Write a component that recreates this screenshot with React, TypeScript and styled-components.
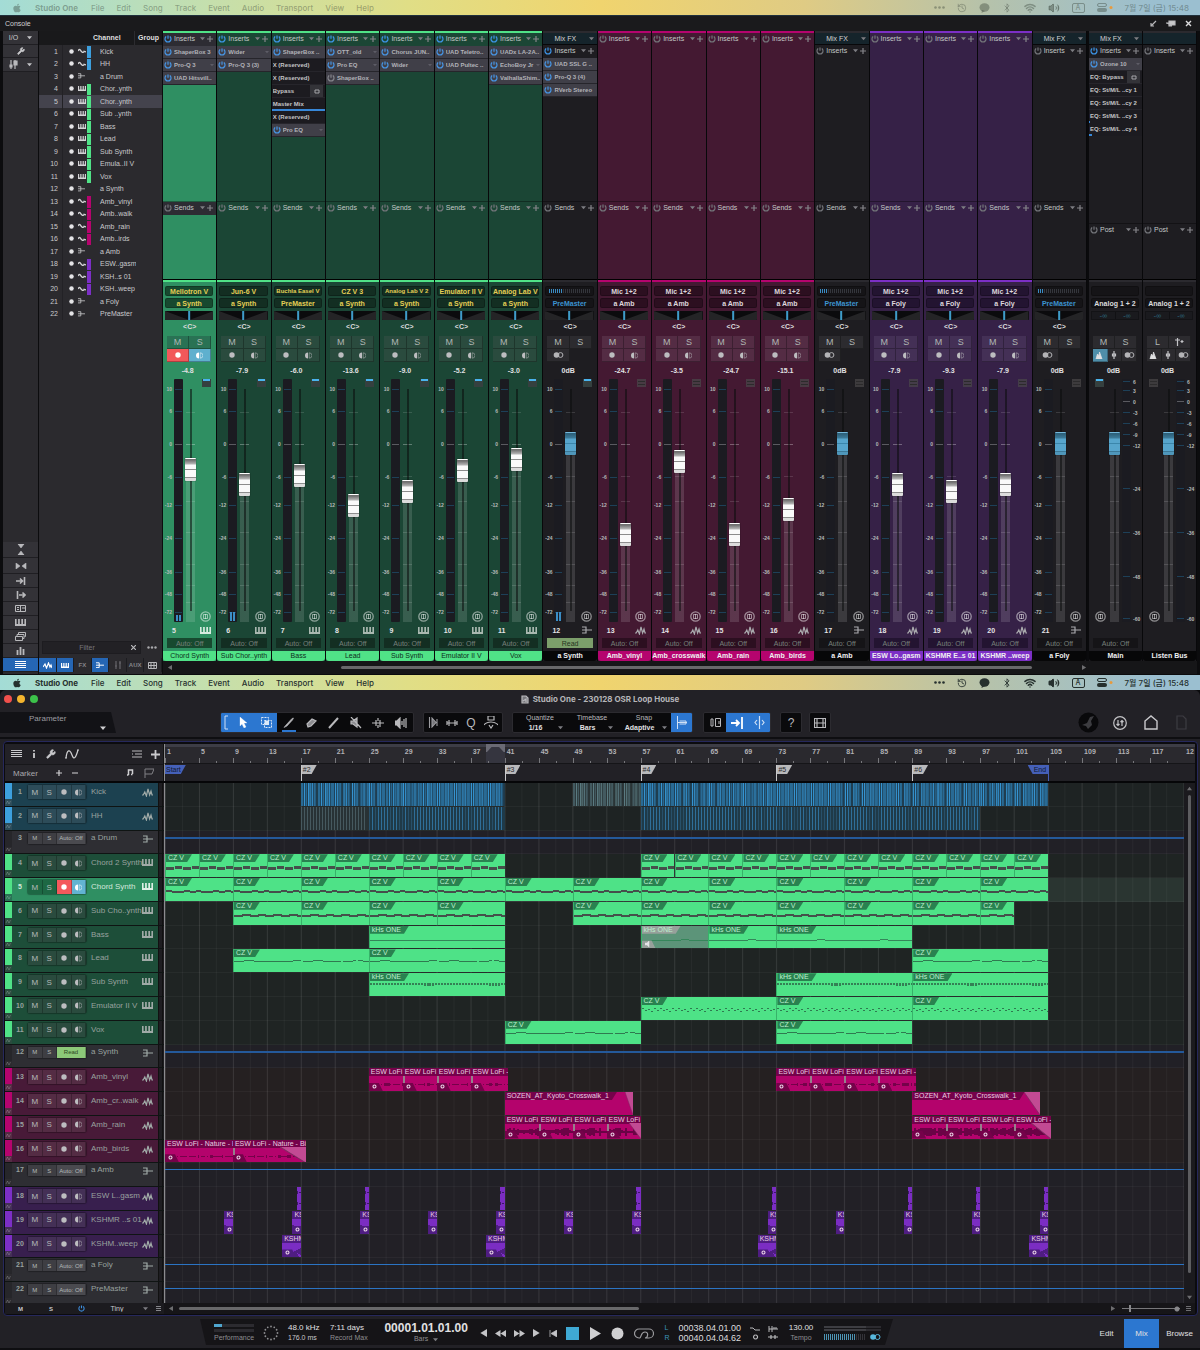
import React from "react";
import styled, { createGlobalStyle, css } from "styled-components";
import { FaApple } from "react-icons/fa";
import { Bluetooth, History, Volume2, Wifi, Wrench } from "lucide-react";

const Global = createGlobalStyle`
  * { box-sizing: border-box; }
  body { margin: 0; background: #0b0b0d; font-family: "Liberation Sans", Arial, "Noto Sans CJK KR", sans-serif; font-size: 7px; color: #c9c9cc; }
  ul, ol { list-style: none; margin: 0; padding: 0; }
  button, input, select { font: inherit; color: inherit; margin: 0; padding: 0; border: 0; background: transparent; }
  button { display: flex; align-items: center; justify-content: center; }
  select { appearance: none; }
  svg { display: block; flex: none; }
`;

/* ---------- data ---------- */

type Kind = "audio" | "inst" | "bus";
type Tone = "blue" | "green" | "sel" | "pink" | "violet" | "bus";

const tones: Record<Tone, { line: string; strip: string; head: string; lane: string; btn: string; box: string }> = {
  blue: { line: "#3d9fdd", strip: "#1d3d4c", head: "#1c4150", lane: "#1e2323", btn: "#2d4c59", box: "#14303c" },
  green: { line: "#50e287", strip: "#1b4635", head: "#1d4e39", lane: "#1f2423", btn: "#2a4b3e", box: "#132e22" },
  sel: { line: "#50e287", strip: "#2f8f62", head: "#2f8f62", lane: "#2a3531", btn: "#297254", box: "#17492f" },
  pink: { line: "#b5046e", strip: "#441932", head: "#481a38", lane: "#252021", btn: "#542c44", box: "#2c0f20" },
  violet: { line: "#7c2fc6", strip: "#362147", head: "#381f4e", lane: "#222026", btn: "#443056", box: "#231431" },
  bus: { line: "#2b2a2f", strip: "#1e1d21", head: "#2e2e33", lane: "#212026", btn: "#2c2b2f", box: "#151417" },
};

interface Channel { n: number; name: string; list: string; tone: Tone; kind: Kind }
const channels: Channel[] = [
  { n: 1, name: "Kick", list: "Kick", tone: "blue", kind: "audio" },
  { n: 2, name: "HH", list: "HH", tone: "blue", kind: "audio" },
  { n: 3, name: "a Drum", list: "a Drum", tone: "bus", kind: "bus" },
  { n: 4, name: "Chord 2 Synth", list: "Chor..ynth", tone: "green", kind: "inst" },
  { n: 5, name: "Chord Synth", list: "Chor..ynth", tone: "sel", kind: "inst" },
  { n: 6, name: "Sub Cho..ynth", list: "Sub ..ynth", tone: "green", kind: "inst" },
  { n: 7, name: "Bass", list: "Bass", tone: "green", kind: "inst" },
  { n: 8, name: "Lead", list: "Lead", tone: "green", kind: "inst" },
  { n: 9, name: "Sub Synth", list: "Sub Synth", tone: "green", kind: "inst" },
  { n: 10, name: "Emulator II V", list: "Emula..II V", tone: "green", kind: "inst" },
  { n: 11, name: "Vox", list: "Vox", tone: "green", kind: "inst" },
  { n: 12, name: "a Synth", list: "a Synth", tone: "bus", kind: "bus" },
  { n: 13, name: "Amb_vinyl", list: "Amb_vinyl", tone: "pink", kind: "audio" },
  { n: 14, name: "Amb_cr..walk", list: "Amb..walk", tone: "pink", kind: "audio" },
  { n: 15, name: "Amb_rain", list: "Amb_rain", tone: "pink", kind: "audio" },
  { n: 16, name: "Amb_birds", list: "Amb..irds", tone: "pink", kind: "audio" },
  { n: 17, name: "a Amb", list: "a Amb", tone: "bus", kind: "bus" },
  { n: 18, name: "ESW L..gasm", list: "ESW..gasm", tone: "violet", kind: "audio" },
  { n: 19, name: "KSHMR ..s 01", list: "KSH..s 01", tone: "violet", kind: "audio" },
  { n: 20, name: "KSHM..weep", list: "KSH..weep", tone: "violet", kind: "audio" },
  { n: 21, name: "a Foly", list: "a Foly", tone: "bus", kind: "bus" },
  { n: 22, name: "PreMaster", list: "PreMaster", tone: "bus", kind: "bus" },
];

type Slot = [kind: "on" | "off" | "text" | "toggle" | "bar", label: string, level?: number];
interface StripData {
  n: number; label: string; tone: Tone; kind: Kind; device?: string; out: string; db: string; fader: number;
  slots?: Slot[]; level?: number; lit?: boolean; send?: number;
}
const on = (...names: string[]): Slot[] => names.map((s) => ["on", s] as Slot);
const strips: StripData[] = [
  { n: 5, label: "Chord Synth", tone: "sel", kind: "inst", device: "Mellotron V", out: "a Synth", db: "-4.8", fader: 141, slots: on("ShaperBox 3", "Pro-Q 3", "UAD Hitsvill.."), level: 6, lit: true },
  { n: 6, label: "Sub Chor..ynth", tone: "green", kind: "inst", device: "Jun-6 V", out: "a Synth", db: "-7.9", fader: 126, slots: on("Wider", "Pro-Q 3 (3)"), level: 9, lit: true },
  { n: 7, label: "Bass", tone: "green", kind: "inst", device: "Buchla Easel V", out: "PreMaster", db: "-6.0", fader: 135, lit: true, slots: [["on", "ShaperBox .."], ["text", "X (Reserved)"], ["text", "X (Reserved)"], ["toggle", "Bypass"], ["bar", "Master Mix", 100], ["text", "X (Reserved)"], ["on", "Pro EQ"]] },
  { n: 8, label: "Lead", tone: "green", kind: "inst", device: "CZ V 3", out: "a Synth", db: "-13.6", fader: 105, lit: true, slots: [["on", "OTT_old"], ["on", "Pro EQ"], ["off", "ShaperBox .."]] },
  { n: 9, label: "Sub Synth", tone: "green", kind: "inst", device: "Analog Lab V 2", out: "a Synth", db: "-9.0", fader: 119, lit: true, slots: on("Chorus JUN..", "Wider") },
  { n: 10, label: "Emulator II V", tone: "green", kind: "inst", device: "Emulator II V", out: "a Synth", db: "-5.2", fader: 140, lit: true, slots: on("UAD Teletro..", "UAD Pultec ..") },
  { n: 11, label: "Vox", tone: "green", kind: "inst", device: "Analog Lab V", out: "a Synth", db: "-3.0", fader: 151, lit: true, slots: on("UADx LA-2A..", "EchoBoy Jr", "ValhallaShim..") },
  { n: 12, label: "a Synth", tone: "bus", kind: "bus", out: "PreMaster", db: "0dB", fader: 167, level: 9, lit: true, slots: on("UAD SSL G ..", "Pro-Q 3 (4)", "RVerb Stereo"), send: 7 },
  { n: 13, label: "Amb_vinyl", tone: "pink", kind: "audio", device: "Mic 1+2", out: "a Amb", db: "-24.7", fader: 76 },
  { n: 14, label: "Amb_crosswalk", tone: "pink", kind: "audio", device: "Mic 1+2", out: "a Amb", db: "-3.5", fader: 149 },
  { n: 15, label: "Amb_rain", tone: "pink", kind: "audio", device: "Mic 1+2", out: "a Amb", db: "-24.7", fader: 76 },
  { n: 16, label: "Amb_birds", tone: "pink", kind: "audio", device: "Mic 1+2", out: "a Amb", db: "-15.1", fader: 101 },
  { n: 17, label: "a Amb", tone: "bus", kind: "bus", out: "PreMaster", db: "0dB", fader: 167, send: 4 },
  { n: 18, label: "ESW Lo..gasm", tone: "violet", kind: "audio", device: "Mic 1+2", out: "a Foly", db: "-7.9", fader: 126 },
  { n: 19, label: "KSHMR E..s 01", tone: "violet", kind: "audio", device: "Mic 1+2", out: "a Foly", db: "-9.3", fader: 119 },
  { n: 20, label: "KSHMR ..weep", tone: "violet", kind: "audio", device: "Mic 1+2", out: "a Foly", db: "-7.9", fader: 126 },
  { n: 21, label: "a Foly", tone: "bus", kind: "bus", out: "PreMaster", db: "0dB", fader: 167, send: 3 },
];

type Look = "kick" | "hat" | "chord" | "riff" | "sub" | "bass" | "lead" | "dots" | "arp" | "loop" | "plain" | "noise" | "sliver" | "hit" | "sweep";
interface ClipData { at: number; to: number; look: Look; title?: string; dim?: boolean; fade?: number; joint?: boolean }
const run = (from: number, to: number, step: number, look: Look, title?: string): ClipData[] => {
  const out: ClipData[] = [];
  for (let b = from; b < to; b += step) out.push({ at: b, to: Math.min(b + step, to), look, title });
  return out;
};
const loops = (from: number, end: number, look: Look, fade?: number): ClipData[] =>
  [0, 1, 2, 3].map((i) => ({
    at: from + i * 4, to: i === 3 ? end : from + i * 4 + 4, look, joint: i > 0,
    title: i === 3 && end > from + 16.2 ? "ESW LoFi -" : "ESW LoFi", fade: i === 3 ? fade : undefined,
  }));
const at = (bars: number[], len: number, look: Look, title?: string): ClipData[] => bars.map((b) => ({ at: b - len, to: b, look, title }));

const clips: Record<number, ClipData[]> = {
  1: [{ at: 17, to: 41, look: "kick" }, { at: 49, to: 57, look: "kick", dim: true }, { at: 57, to: 105, look: "kick" }],
  2: [{ at: 17, to: 25, look: "hat", dim: true }, { at: 25, to: 41, look: "hat" }, { at: 57, to: 97, look: "hat" }],
  4: [...run(1, 41, 4, "chord", "CZ V"), ...run(57, 105, 4, "chord", "CZ V")],
  5: run(1, 105, 8, "riff", "CZ V"),
  6: [...run(9, 41, 8, "sub", "CZ V"), ...run(49, 101, 8, "sub", "CZ V")],
  7: [{ at: 25, to: 41, look: "bass", title: "kHs ONE" }, { at: 57, to: 65, look: "bass", title: "kHs ONE", dim: true }, { at: 65, to: 73, look: "bass", title: "kHs ONE" }, { at: 73, to: 89, look: "bass", title: "kHs ONE" }],
  8: [...run(9, 41, 16, "lead", "CZ V"), ...run(89, 105, 16, "lead", "CZ V")],
  9: [...run(25, 41, 16, "dots", "kHs ONE"), ...run(73, 105, 16, "dots", "kHs ONE")],
  10: run(57, 105, 16, "arp", "CZ V"),
  11: [...run(41, 57, 16, "lead", "CZ V"), ...run(73, 89, 16, "lead", "CZ V")],
  13: [...loops(25, 41.4, "loop"), ...loops(73, 89.4, "loop")],
  14: [{ at: 41, to: 56.1, look: "plain", title: "SOZEN_AT_Kyoto_Crosswalk_1", fade: 8 }, { at: 89, to: 104.1, look: "plain", title: "SOZEN_AT_Kyoto_Crosswalk_1", fade: 16 }],
  15: [...loops(41, 57, "noise", 12), ...loops(89, 105.3, "noise", 20)],
  16: [{ at: 1, to: 9, look: "loop", title: "ESW LoFi - Nature - Birds" }, { at: 9, to: 17.6, look: "loop", title: "ESW LoFi - Nature - Birds", joint: true, fade: 26 }],
  18: at([17, 25, 41, 57, 73, 89, 97, 105], 0.5, "sliver"),
  19: at([9, 17, 25, 33, 41, 49, 57, 73, 81, 89, 97, 105], 1, "hit", "KSHMR"),
  20: at([17, 41, 73, 105], 2.2, "sweep", "KSHMR"),
};
const BARS = 120;
const pct = (bars: number) => `${(bars / BARS) * 100}%`;

/* ---------- icons ---------- */

const Power = ({ c = "#3d8fe0", s = 8 }: { c?: string; s?: number }) => (
  <svg width={s} height={s} viewBox="0 0 8 8" fill="none" stroke={c} strokeWidth="1.2"><path d="M2.2 1.6a3 3 0 1 0 3.6 0M4 .6v3.2" /></svg>
);
const Caret = ({ c = "#7d7d82", s = 5 }: { c?: string; s?: number }) => (
  <svg width={s} height={s} viewBox="0 0 6 6"><path d="M0 1.500h6L3 5z" fill={c} /></svg>
);
const Plus = ({ c = "#85858a", s = 6 }: { c?: string; s?: number }) => (
  <svg width={s} height={s} viewBox="0 0 6 6"><path d="M3 0v6M0 3h6" stroke={c} strokeWidth="1.2" /></svg>
);
const Keys = ({ c = "#a9b8b0", w = 11 }: { c?: string; w?: number }) => (
  <svg width={w} height={Math.round(w * 0.64)} viewBox="0 0 11 7" preserveAspectRatio="none"><path d="M0 0h1.600v5h1.500V0h1.700v5h1.500V0H8v5h1.400V0H11v7H0z" fill={c} /></svg>
);
const Wave = ({ c = "#a9a9ad" }: { c?: string }) => (
  <svg width="11" height="9" viewBox="0 0 11 9" fill="none" stroke={c} strokeWidth="1.2"><path d="M0 7h1.200L2.800 4l1.600 4L6 1l1.600 6L9 3l1 4h1" /></svg>
);
const Bus = ({ c = "#a9a9ad", w = 10 }: { c?: string; w?: number }) => (
  <svg width={w} height={w * 0.8} viewBox="0 0 10 8" fill="none" stroke={c} strokeWidth="1.2"><path d="M0 1h4v6H0M0 4h10" /></svg>
);
const Tilde = () => (
  <svg width="8" height="6" viewBox="0 0 8 6"><path d="M0 3c1-2 2-2 3 0l1 1c.8.8 1.600.4 2-.6L8 4" fill="none" stroke="#d4d4d6" strokeWidth="1.300" /></svg>
);
const KindIcon = ({ kind, c }: { kind: Kind; c?: string }) => (kind === "inst" ? <Keys c={c} /> : kind === "audio" ? <Wave c={c} /> : <Bus c={c} />);
const Dot = ({ c = "#bdbdc0", s = 6 }: { c?: string; s?: number }) => <svg width={s} height={s} viewBox="0 0 6 6"><circle cx="3" cy="3" r="2.700" fill={c} /></svg>;
const Monitor = ({ c = "#bdbdc0" }: { c?: string }) => (
  <svg width="7" height="7" viewBox="0 0 7 7"><path d="M3 .5a3 3 0 0 0 0 6z" fill={c} /><path d="M4.200 .8a2.700 2.700 0 0 1 0 5.400z" fill="none" stroke={c} strokeOpacity=".7" strokeWidth=".7" /></svg>
);
const Rings = ({ c = "#b4b4b7" }: { c?: string }) => (
  <svg width="11" height="6" viewBox="0 0 11 6"><circle cx="3.500" cy="3" r="2.800" fill={c} /><circle cx="7.500" cy="3" r="2.400" fill="none" stroke={c} /></svg>
);
const Stereo = () => (
  <svg width="11" height="11" viewBox="0 0 11 11" fill="none" stroke="#ffffff" strokeOpacity=".5"><circle cx="5.500" cy="5.500" r="4.700" strokeWidth="1.300" /><path d="M3.500 3.500v4h4v-4zM5.500 3v5" strokeWidth="1" /></svg>
);
const Gear = () => (
  <svg width="5" height="5" viewBox="0 0 6 6"><circle cx="3" cy="3" r="1.800" fill="none" stroke="#ead5e6" strokeWidth="1.300" /></svg>
);
const Arrow = ({ dir, c = "#6d6d70", s = 5 }: { dir: "l" | "r" | "u" | "d"; c?: string; s?: number }) => (
  <svg width={s} height={s} viewBox="0 0 6 6"><path fill={c} d={{ l: "M6 0v6L1 3z", r: "M0 0v6l5-3z", u: "M0 5h6L3 1z", d: "M0 1h6L3 5z" }[dir]} /></svg>
);
const Lines = ({ n = 4, w = 11, c = "#c9c9cc" }: { n?: number; w?: number; c?: string }) => (
  <svg width={w} height={n * 2} viewBox={`0 0 ${w} ${n * 2}`}>{Array.from({ length: n }, (_, i) => <rect key={i} y={i * 2} width={w} height="1" fill={c} />)}</svg>
);
const Glyph = ({ d, w = 12, h = 12, c = "#b9b9bc", fill = "none", sw = 1.2 }: { d: string; w?: number; h?: number; c?: string; fill?: string; sw?: number }) => (
  <svg width={w} height={h} viewBox={`0 0 ${w} ${h}`} fill={fill} stroke={c} strokeWidth={sw}><path d={d} /></svg>
);

/* ---------- mac menu bar ---------- */

const MenuBar = styled.nav<{ $faded?: boolean }>`
  height: 15px; display: flex; align-items: center; justify-content: space-between; padding: 0 11px 0 12px;
  background: linear-gradient(90deg, #a3dcd6 0%, #c4dfae 17%, #e0de86 34%, #f0d46e 50%, #dfcb84 67%, #b6c2aa 82%, #9bbfd0 96%);
  font-family: Inter, "Noto Sans CJK KR", sans-serif; font-size: 8px; font-weight: 500;
  color: ${(p) => (p.$faded ? "rgba(50,60,50,.38)" : "#26302e")};
`;
const MenuItems = styled.ul`display: flex; align-items: center; gap: 12px; b { font-weight: 700; margin: 0 1px; }`;
const MenuStatus = styled.div`display: flex; align-items: center; gap: 12px; svg { display: block; }`;
const KeyBox = styled.span`border: 1px solid currentColor; border-radius: 2px; width: 13px; height: 10px; font-size: 7px; line-height: 8px; text-align: center;`;

const Menu = ({ faded }: { faded?: boolean }) => (
  <MenuBar $faded={faded} aria-label="Menu bar">
    <MenuItems>
      <li><FaApple size={10} /></li><li><b>Studio One</b></li>
      {["File", "Edit", "Song", "Track", "Event", "Audio", "Transport", "View", "Help"].map((m) => <li key={m}>{m}</li>)}
    </MenuItems>
    <MenuStatus>
      <svg width="11" height="3" viewBox="0 0 11 3" fill="currentColor"><circle cx="1.500" cy="1.500" r="1.300" /><circle cx="5.500" cy="1.500" r="1.300" /><circle cx="9.500" cy="1.500" r="1.300" /></svg>
      <History size={10} />
      <svg width="11" height="10" viewBox="0 0 11 10" fill="currentColor"><ellipse cx="5.500" cy="4.500" rx="5" ry="4.200" /><path d="M3 7l-.5 3L6 8z" /></svg>
      <Bluetooth size={10} /><Wifi size={12} strokeWidth={3} /><Volume2 size={12} fill="currentColor" />
      <KeyBox>A</KeyBox>
      <svg width="16" height="9" viewBox="0 0 16 9"><rect x=".5" y=".5" width="9" height="3" rx="1.500" fill="none" stroke="currentColor" /><rect x="0" y="5" width="10" height="4" rx="2" fill="currentColor" /><circle cx="14" cy="4.500" r="1.500" fill="#e89a3c" /></svg>
      <span>7월 7일 (금) 15:48</span>
    </MenuStatus>
  </MenuBar>
);

/* ---------- console ---------- */

const Console = styled.section`background: #1a1a1c; border-top: 1px solid #20303c; border-bottom: 1px solid #0b0b0d;`;
const ConsoleTitle = styled.header`
  height: 15px; display: flex; align-items: center; justify-content: space-between; padding: 0 8px 0 5px; color: #d0d0d2;
`;
const TitleIcons = styled.div`display: flex; gap: 9px; align-items: center;`;
const ConsoleBody = styled.div`display: flex; background: #0c0c0e; padding: 0 3px;`;

const ToolRail = styled.div`
  width: 35px; background: #2b2a2e; display: flex; flex-direction: column; padding-bottom: 2px; margin-right: 1px;
`;
const RailButton = styled.button<{ $h?: number; $on?: boolean }>`
  height: ${(p) => p.$h ?? 14}px; gap: 9px; border-bottom: 1px solid #1f1e22; background: ${(p) => (p.$on ? "#2566b4" : "#333237")};
`;
const Push = styled.div`flex: 1;`;

const ListPane = styled.div`width: 123px; background: #2b2a2e; margin-right: 1px; display: flex; flex-direction: column; padding-bottom: 2px;`;
const ListHead = styled.div`
  height: 14px; background: #19191b; display: grid; grid-template-columns: 54px 41px 1fr; color: #dededf;
  font-weight: 700; line-height: 14px; span:last-child { border-left: 1px solid #2c2c30; padding-left: 3px; }
`;
const ListRows = styled.ol`height: 275px; display: grid; grid-template-rows: repeat(22, 1fr);`;
const ListRow = styled.li<{ $active?: boolean }>`
  display: grid; grid-template-columns: 19px 5px 12px 12px 5px 1fr; align-items: center;
  background: ${(p) => (p.$active ? "#44434d" : "transparent")};
`;
const ListNum = styled.span`text-align: right;`;
const ListRule = styled.i`height: 100%; border-right: 1px solid #232226;`;
const ListDot = styled.span`padding-left: 6px;`;
const ListIcon = styled.span`padding-left: 3px;`;
const ListName = styled.span`padding-left: 8px; white-space: nowrap; overflow: hidden; width: 44px; line-height: 11px;`;
const Swatch = styled.i<{ $c: string }>`align-self: stretch; margin-top: 1px; width: 4px; background: ${(p) => p.$c};`;
const FilterRow = styled.div`display: flex; align-items: center; gap: 6px; padding: 0 5px 4px 3px; color: #9a9a9d;`;
const FilterBox = styled.label`
  flex: 1; min-width: 0; height: 13px; display: flex; align-items: center; padding-right: 4px; border: 1px solid #1d1c20; background: #222125;
  input { flex: 1; width: 100%; min-width: 0; text-align: center; outline: 0; }
  input::placeholder { color: #77767b; }
`;
const ToggleRow = styled.div`display: grid; grid-template-columns: repeat(7, 1fr); height: 14px;`;
const Toggle = styled.button<{ $on?: boolean }>`
  font-size: 6px; font-weight: 700; background: ${(p) => (p.$on ? "#2566b4" : "#2b2a2e")}; color: #85858a; border-right: 1px solid #1c1c20;
`;

const StripsPane = styled.div`flex: 1; min-width: 0; display: flex; flex-direction: column;`;
const StripRow = styled.div`display: flex;`;
const MixStrips = styled.div`flex: 1; min-width: 0; display: grid; grid-template-columns: repeat(17, minmax(0, 1fr)); border-right: 2px solid #0a0a0c;`;
const MasterStrips = styled.div`width: 108px; display: grid; grid-template-columns: 1fr 1fr;`;
const Strip = styled.article<{ $t: Tone }>`
  background: ${(p) => tones[p.$t].strip}; border-right: 1px solid #08080a; display: flex; flex-direction: column; min-width: 0;
`;
const ToneLine = styled.i<{ $t: Tone }>`height: 2px; background: ${(p) => tones[p.$t].line};`;
const InsertArea = styled.div<{ $tall?: boolean }>`height: ${(p) => (p.$tall ? 190 : 168)}px; overflow: hidden;`;
const SendArea = styled.div<{ $short?: boolean }>`
  height: ${(p) => (p.$short ? 57 : 79)}px; border-top: 1px solid rgba(0,0,0,.35); border-bottom: 1px solid #000;
`;
const RackHead = styled.header<{ $dark?: boolean }>`
  height: 13px; display: flex; align-items: center; gap: 2px; padding: 0 3px 2px 1px; color: #c3c8c6;
  background: ${(p) => (p.$dark ? "#2d2c33" : "transparent")};
  span { flex: 1; }
`;
const MixFx = styled.button`
  width: 100%; height: 12px; background: #15242b; color: #d2d2d4; border-bottom: 1px solid #08080a; justify-content: space-between; padding: 0 3px 0 11px;
`;
const SlotRow = styled.div<{ $plain?: boolean }>`
  height: 13px; display: flex; align-items: center; gap: 2px; padding: 0 2px 0 1px; white-space: nowrap; overflow: hidden;
  border-bottom: 1px solid #26252b; font-size: 6px; font-weight: 700; color: ${(p) => (p.$plain ? "#c4c4c6" : "#b2b2b8")};
  background: ${(p) => (p.$plain ? "#1c1b20" : "#403f48")};
  span { flex: 1; min-width: 0; overflow: hidden; }
`;
const SlotToggle = styled.button`width: 13px; height: 12px; background: #333338;`;
const SlotBar = styled.div<{ $lvl: number }>`
  height: 13px; padding: 3px 1px 0; font-size: 6px; line-height: 7px; font-weight: 700; color: #c4c4c6; white-space: nowrap;
  background: linear-gradient(#3787d8, #3787d8) 0 100% / ${(p) => p.$lvl}% 2px no-repeat, #1c1b20;
`;
const StripBody = styled.div`padding-top: 4px; display: flex; flex-direction: column;`;
const RouteBox = styled.button<{ $t: Tone; $c: string; $small?: boolean }>`
  margin: 0 3px 2px 2px; height: 10px; border-radius: 2px; font-weight: 700; font-size: ${(p) => (p.$small ? 6 : 7)}px; white-space: nowrap;
  background: ${(p) => tones[p.$t].box}; color: ${(p) => p.$c}; border: 1px solid rgba(0,0,0,.22);
`;
const PanBox = styled.div`margin: 1px 3px 0 2px; height: 9px; background: #0b0b0d; border-radius: 1px; overflow: hidden; svg { width: 100%; height: 100%; }`;
const DualBox = styled.div`
  margin: 1px 3px 0 2px; height: 9px; display: grid; grid-template-columns: 1fr 1fr; background: #1a1a1e; border: 1px solid #131316;
  color: #2c6a80; text-align: center; line-height: 7px; span + span { border-left: 1px solid #111114; }
`;
const PanLabel = styled.div`height: 15px; line-height: 13px; text-align: center; font-weight: 700; color: #dcdcde;`;
const PadGrid = styled.div<{ $t: Tone }>`
  margin: 1px 5px 0 4px; display: grid; grid-template-columns: repeat(6, 1fr); grid-auto-rows: 13px; color: #b0b6b3; font-size: 9px;
`;
const Pad = styled.button<{ $t: Tone; $bg?: string; $span?: number }>`
  grid-column: span ${(p) => p.$span ?? 3}; background: ${(p) => p.$bg ?? tones[p.$t].btn}; border: 1px solid rgba(0,0,0,.28); border-width: 0 1px 1px 0;
`;
const Gain = styled.div`height: 17px; line-height: 17px; text-align: center; font-weight: 700; color: #e0e0e2; padding-right: 4px;`;
const FaderArea = styled.div<{ $rev?: boolean }>`display: flex; height: 243px; gap: 2px; padding-right: ${(p) => (p.$rev ? 0 : 5)}px; padding-left: ${(p) => (p.$rev ? 6 : 0)}px;`;
const Scale = styled.ul<{ $rev?: boolean }>`
  width: 9px; padding-top: ${(p) => (p.$rev ? 0 : 7)}px; font-size: 5px; font-weight: 700; line-height: 6px; color: #b5bab8; text-align: ${(p) => (p.$rev ? "left" : "right")};
`;
const Mark = styled.li<{ $gap: number }>`height: ${(p) => p.$gap}px;`;
const Meter = styled.div`width: 9px; background: #1b1b21; border-radius: 1px;`;
const Side = styled.div<{ $rev?: boolean }>`
  flex: 1; display: flex; flex-direction: column; justify-content: space-between; align-items: ${(p) => (p.$rev ? "flex-start" : "flex-end")};
`;
const Fader = styled.input<{ $bus?: boolean }>`
  appearance: none; writing-mode: vertical-lr; direction: rtl; width: 11px; height: 243px; outline: 0;
  &::-webkit-slider-runnable-track { width: 11px; height: 100%; background: transparent; }
  &::-webkit-slider-thumb {
    appearance: none; width: 11px; height: 23px; border-radius: 1px; box-shadow: 0 0 1px #000;
    background: ${(p) => p.$bus
      ? "linear-gradient(#74b8dc 0 1px, #2d617b 1px 2px, #3d7c9b 6px, #57a5cc 7px 11px, #3b86ab 11px 12px, #57a5cc 12px 19px, #3b7896 19px 20px, #4f97bb 20px)"
      : "linear-gradient(#fff 0 1px, #6f6f6f 1px 2px, #b5b5b5 6px, #fafafa 7px 11px, #8c8c8c 11px 12px, #fafafa 12px 19px, #8e8e8e 19px 20px, #dcdcdc 20px)"};
  }
`;
const FootRow = styled.div`height: 16px; display: flex; align-items: center; justify-content: space-between; padding: 0 5px 0 9px; font-weight: 700; color: #e4e4e6;`;
const AutoButton = styled.button<{ $t: Tone; $read?: boolean; $hide?: boolean }>`
  height: 10px; margin: 0 4px 3px; visibility: ${(p) => (p.$hide ? "hidden" : "visible")};
  background: ${(p) => (p.$read ? "#7c9f6b" : tones[p.$t].box)}; color: ${(p) => (p.$read ? "#26351f" : "#77807b")};
`;
const NameTag = styled.footer<{ $t: Tone }>`
  height: 10px; line-height: 9px; text-align: center; white-space: nowrap; overflow: hidden; border-radius: 0 0 3px 3px;
  font-size: 7px; font-weight: ${(p) => (p.$t === "green" || p.$t === "sel" ? 400 : 700)};
  background: ${(p) => (p.$t === "bus" ? "#070708" : tones[p.$t].line)}; color: ${(p) => (p.$t === "green" || p.$t === "sel" ? "#0e2e1b" : "#f0f0f2")};
`;
const HScroll = styled.div`height: 13px; display: flex; align-items: center; gap: 4px; background: #161618; padding: 0 110px 0 4px;`;
const HTrack = styled.div`flex: 1; display: flex; padding: 0 46px 0 165px;`;
const HThumb = styled.i`flex: 1; height: 3px; border-radius: 2px; background: #68686a;`;

const marks = [10, 6, 0, -6, -12, -24, -36, -48, -72];
const markGaps = [22, 33, 33, 28, 33, 34, 22, 18, 6];
const masterMarks = [6, 3, 0, -3, -6, -9, -12, -24, -36, -48, -60];
const masterGaps = [9, 11, 11, 11, 11, 11, 43, 44, 44, 42, 6];
const positions = (gaps: number[], start: number) => gaps.reduce<number[]>((a, g) => [...a, a[a.length - 1] + g], [start]).slice(0, -1);

const MeterView = ({ gaps, start, zero, level }: { gaps: number[]; start: number; zero: number; level?: number }) => (
  <Meter>
    <svg width="9" height="243" viewBox="0 0 9 243" shapeRendering="crispEdges">
      {positions(gaps, start).map((y, i) => <rect key={i} x="1" y={y - 1} width="7" height="1" fill={i === zero ? "#5a5a60" : "#1d4058"} />)}
      {level && <><rect x="2" y={242 - level} width="2" height={level} fill="#3b8ec6" /><rect x="5" y={242 - level} width="2" height={level} fill="#3b8ec6" /></>}
    </svg>
  </Meter>
);
const ticks = [33, 65, 97, 122, 153, 185, 206, 223];
const faderBack = (value: number): React.CSSProperties => ({
  backgroundImage: [
    "linear-gradient(rgba(10,12,12,.55), rgba(10,12,12,.55))",
    ...ticks.map((_, i) => `linear-gradient(rgba(255,255,255,${i === 1 ? 0.3 : 0.13}), rgba(255,255,255,${i === 1 ? 0.3 : 0.13}))`),
    "linear-gradient(rgba(255,255,255,.13), rgba(255,255,255,.13))",
  ].join(","),
  backgroundSize: ["2px 222px", ...ticks.map(() => "9px 1px"), `9px ${value}px`].join(","),
  backgroundPosition: ["5px 10px", ...ticks.map((y) => `1px ${y}px`), `1px ${243 - value}px`].join(","),
  backgroundRepeat: "no-repeat",
});
const EqBadge = ({ lit }: { lit?: boolean }) => (
  <svg width="9" height="8" viewBox="0 0 9 8"><rect width="9" height="8" fill={lit ? "#35403f" : "#4a494a"} fillOpacity={lit ? 1 : 0.7} />{lit ? <rect x="1" y="0" width="7" height="2" fill="#4ab4ee" /> : <path d="M1 2.500h7M1 5.500h7" stroke="#2c2b2c" />}</svg>
);
const PanView = () => (
  <PanBox><svg viewBox="0 0 48 9" preserveAspectRatio="none"><path d="M0 0L24 9H0zM48 0L24 9h24z" fill="#242426" /><rect x="23" width="2" height="9" fill="#3f9cc9" /></svg></PanBox>
);
const SendLevel = ({ n }: { n: number }) => (
  <svg width="42" height="4" viewBox="0 0 42 4">{Array.from({ length: 21 }, (_, i) => <rect key={i} x={i * 2} width="1" height="4" fill={i < n ? "#3a8cc4" : "#34363c"} />)}</svg>
);
const Rack = ({ title, lit, dark }: { title: string; lit?: boolean; dark?: boolean }) => (
  <RackHead $dark={dark}><Power c={lit ? "#3d95e8" : "#73757a"} /><span>{title}</span><Caret /><Plus /></RackHead>
);
const SlotView = ({ slot: [kind, label, level = 0] }: { slot: Slot }) => {
  if (kind === "bar") return <SlotBar $lvl={level}>{label}</SlotBar>;
  if (kind === "text") return <SlotRow $plain><span>{label}</span></SlotRow>;
  if (kind === "toggle") return <SlotRow $plain><span>{label}</span><SlotToggle aria-label={`${label} switch`}><Glyph d="M1 1h4v3H1z" w={6} h={5} c="#a5a5a8" sw={1} /></SlotToggle></SlotRow>;
  return <SlotRow><Power c={kind === "on" ? "#4796e6" : "#85858c"} /><span>{label}</span>{label.length < 11 && <Caret c="#5d5c66" s={4} />}</SlotRow>;
};

const StripView = ({ s }: { s: StripData }) => {
  const bus = s.kind === "bus";
  const gold = s.kind === "inst";
  const routeColor = bus ? "#3c93cf" : gold ? "#e4cf55" : "#dcd6dc";
  return (
    <Strip $t={s.tone} aria-label={s.label}>
      <ToneLine $t={s.tone} />
      <InsertArea>
        {bus && <MixFx><span>Mix FX</span><Caret /></MixFx>}
        <Rack title="Inserts" lit={!!s.slots} dark={s.tone === "sel"} />
        {s.slots?.map((slot, i) => <SlotView key={i} slot={slot} />)}
      </InsertArea>
      <SendArea><Rack title="Sends" dark={s.tone === "sel"} /></SendArea>
      <ToneLine $t={s.tone} />
      <StripBody>
        <RouteBox $t={s.tone} $c={routeColor} $small={(s.device?.length ?? 0) > 13} aria-label="Input">{bus ? <SendLevel n={s.send ?? 0} /> : s.device}</RouteBox>
        <RouteBox $t={s.tone} $c={routeColor}>{s.out}</RouteBox>
        <PanView />
        <PanLabel>&lt;C&gt;</PanLabel>
        <PadGrid $t={s.tone}>
          <Pad $t={s.tone}>M</Pad><Pad $t={s.tone}>S</Pad>
          {bus ? <Pad $t={s.tone} aria-label="Mode"><Rings /></Pad> : (
            <><Pad $t={s.tone} $bg={s.tone === "sel" ? "#f2585a" : undefined} aria-label="Record"><Dot c={s.tone === "sel" ? "#fff" : undefined} /></Pad>
              <Pad $t={s.tone} $bg={s.tone === "sel" ? "#5fb0ce" : undefined} aria-label="Monitor"><Monitor c={s.tone === "sel" ? "#fff" : undefined} /></Pad></>
          )}
        </PadGrid>
        <Gain>{s.db}</Gain>
        <FaderArea>
          <Scale>{marks.map((m, i) => <Mark key={m} $gap={markGaps[i]}>{m}</Mark>)}</Scale>
          <MeterView gaps={markGaps} start={11} zero={2} level={s.level} />
          <Fader type="range" min={0} max={220} defaultValue={s.fader} $bus={bus} style={faderBack(s.fader)} aria-label={`${s.label} level`} />
          <Side><EqBadge lit={s.lit} /><Stereo /></Side>
        </FaderArea>
        <FootRow><span>{s.n}</span><KindIcon kind={s.kind} c={s.tone === "sel" ? "#d7ebe0" : undefined} /></FootRow>
        <AutoButton $t={s.tone} $read={s.n === 12}>{s.n === 12 ? "Read" : "Auto: Off"}</AutoButton>
        <NameTag $t={s.tone}>{s.label}</NameTag>
      </StripBody>
    </Strip>
  );
};

const Metro = () => <svg width="9" height="8" viewBox="0 0 9 8"><path d="M1 8l1.500-5L4 5l.5-4L7 8z" fill="#e0e0e2" stroke="#e0e0e2" strokeWidth=".8" /></svg>;
const MiniFader = () => <Glyph d="M3 0v8M1.500 3h3v2h-3z" w={6} h={8} c="#c4c4c7" />;

const MasterView = ({ label, listen }: { label: string; listen?: boolean }) => (
  <Strip $t="bus" aria-label={label}>
    <ToneLine $t="bus" />
    <InsertArea $tall>
      <MixFx aria-label="Mix FX">{!listen && <><span>Mix FX</span><Caret /></>}</MixFx>
      <Rack title="Inserts" lit={!listen} />
      {!listen && ([["on", "Ozone 10"], ["toggle", "EQ: Bypass"], ["text", "EQ: St/M/L ..cy 1"], ["text", "EQ: St/M/L ..cy 2"], ["bar", "EQ: St/M/L ..cy 3", 2], ["bar", "EQ: St/M/L ..cy 4", 6]] as Slot[]).map((x, i) => <SlotView key={i} slot={x} />)}
    </InsertArea>
    <SendArea $short><Rack title="Post" /></SendArea>
    <ToneLine $t="bus" />
    <StripBody>
      <RouteBox $t="bus" $c="#ccc" aria-label="Input" />
      <RouteBox $t="bus" $c="#dcdcde">Analog 1 + 2</RouteBox>
      <DualBox><span>-∞</span><span>-∞</span></DualBox>
      <PanLabel />
      <PadGrid $t="bus">
        <Pad $t="bus">{listen ? "L" : "M"}</Pad><Pad $t="bus" aria-label="Solo">{listen ? <Glyph d="M2.500 0v8M0 2h5M7 2v3M5.500 3.500h3" w={9} h={8} c="#c4c4c7" /> : "S"}</Pad>
        <Pad $t="bus" $span={2} $bg={listen ? undefined : "#4f8ea9"} aria-label="Metronome"><Metro /></Pad>
        <Pad $t="bus" $span={2} aria-label="Fader mode"><MiniFader /></Pad>
        <Pad $t="bus" $span={2} aria-label="Mode"><Rings /></Pad>
      </PadGrid>
      <Gain>0dB</Gain>
      <FaderArea $rev>
        <Side $rev><EqBadge lit={!listen} /><Stereo /></Side>
        <Fader type="range" min={0} max={220} defaultValue={167} $bus style={faderBack(167)} aria-label={`${label} level`} />
        <MeterView gaps={masterGaps} start={3} zero={2} />
        <Scale $rev>{masterMarks.map((m, i) => <Mark key={m} $gap={masterGaps[i]}>{m}</Mark>)}</Scale>
      </FaderArea>
      <FootRow />
      <AutoButton $t="bus" $hide={listen}>Auto: Off</AutoButton>
      <NameTag $t="bus">{label}</NameTag>
    </StripBody>
  </Strip>
);

const ConsoleView = () => (
  <Console>
    <ConsoleTitle>
      <span>Console</span>
      <TitleIcons><Glyph d="M1 6l5-5M1 3v3h3" w={7} h={7} /><Glyph d="M3 1h6v4H3zM0 3h3v3h3" w={10} h={7} fill="#c8c8ca" /><Glyph d="M1 1l5 5M6 1L1 6" w={7} h={7} c="#dcdcde" sw={1.4} /></TitleIcons>
    </ConsoleTitle>
    <ConsoleBody>
      <ToolRail>
        <RailButton>I/O<Caret c="#c4c4c7" /></RailButton>
        <RailButton $h={13} aria-label="Options"><Wrench size={8} fill="currentColor" /></RailButton>
        <RailButton aria-label="Channel types"><Glyph d="M2 0v9M6 0v9M1 5h2v2H1zM5 1h3v4H5z" w={9} h={9} fill="#b9b9bc" /><Caret c="#c4c4c7" /></RailButton>
        <Push />
        <RailButton $h={16} aria-label="Narrow height"><Glyph d="M1 0h6L4 4zM1 11h6L4 7zM1 .5h6M1 10.500h6" w={8} h={11} fill="#b9b9bc" sw={0.6} /></RailButton>
        <RailButton $h={16} aria-label="Narrow width"><Glyph d="M1 0v6l4-3zM11 0v6L7 3z" w={12} h={6} fill="#b9b9bc" sw={0.6} /></RailButton>
        <RailButton aria-label="Inputs"><Glyph d="M0 4h6M4 1.500L6.500 4 4 6.500M8.500 0v8" w={10} h={8} sw={1.6} /></RailButton>
        <RailButton aria-label="Outputs"><Glyph d="M1.500 0v8M3 4h6M6.500 1.500L9 4 6.500 6.500" w={10} h={8} sw={1.6} /></RailButton>
        <RailButton aria-label="External"><Glyph d="M.5 .5h10v6H.5zM2 2.500h2M2 4.500h2M5.500 1v5M7 3h3" w={11} h={7} sw={1} /></RailButton>
        <RailButton aria-label="Instruments"><Keys c="#b9b9bc" /></RailButton>
        <RailButton aria-label="Groups"><Glyph d="M.5 4.500h7v4h-7zM2 4V2.500h7v4H8M3.500 2V.5h7v4H9.500" w={11} h={9} sw={1} /></RailButton>
        <RailButton aria-label="Scenes"><Glyph d="M1.500 4v5M4.500 1v8M7.500 3v6" w={9} h={9} sw={1.8} /></RailButton>
        <RailButton $on aria-label="Channel list"><Lines c="#fff" /></RailButton>
      </ToolRail>
      <ListPane>
        <ListHead><i /><span>Channel</span><span>Group</span></ListHead>
        <ListRows>
          {channels.map((c) => (
            <ListRow key={c.n} $active={c.n === 5}>
              <ListNum>{c.n}</ListNum><ListRule /><ListDot><Dot c="#e4e4e6" s={5} /></ListDot>
              <ListIcon>{c.kind === "inst" ? <Keys w={8} c="#d4d4d6" /> : c.kind === "bus" ? <Bus w={7} c="#c4c4c7" /> : <Tilde />}</ListIcon>
              <Swatch $c={c.kind === "bus" ? "transparent" : tones[c.tone].line} />
              <ListName>{c.list}</ListName>
            </ListRow>
          ))}
        </ListRows>
        <Push />
        <FilterRow>
          <FilterBox><input placeholder="Filter" aria-label="Filter" /><Glyph d="M0 0l5 5M5 0L0 5" w={5} h={5} /></FilterBox>
          <svg width="10" height="3" viewBox="0 0 10 3" fill="#a9a9ac"><circle cx="1.500" cy="1.500" r="1.200" /><circle cx="5" cy="1.500" r="1.200" /><circle cx="8.500" cy="1.500" r="1.200" /></svg>
        </FilterRow>
        <ToggleRow>
          <Toggle $on aria-label="Audio"><Glyph d="M0 5l2-3 1.500 4L5.500 1 7 5l1-2 1 3" w={9} h={7} c="#fff" /></Toggle>
          <Toggle $on aria-label="Instruments"><Keys w={8} c="#fff" /></Toggle>
          <Toggle>FX</Toggle>
          <Toggle $on aria-label="Buses"><Bus w={8} c="#fff" /></Toggle>
          <Toggle aria-label="VCA"><Glyph d="M2 0v8M6 0v8M1 5h2M5 2h2" w={8} h={8} c="#66656a" /></Toggle>
          <Toggle>AUX</Toggle>
          <Toggle aria-label="Synth pads"><Glyph d="M.5 .5h8v6h-8zM.5 3.500h8M3 .5v6M6 .5v6" w={9} h={7} sw={1} /></Toggle>
        </ToggleRow>
      </ListPane>
      <StripsPane>
        <StripRow>
          <MixStrips>{strips.map((s) => <StripView key={s.n} s={s} />)}</MixStrips>
          <MasterStrips><MasterView label="Main" /><MasterView label="Listen Bus" listen /></MasterStrips>
        </StripRow>
        <HScroll><Arrow dir="l" /><HTrack><HThumb /></HTrack><Arrow dir="r" /></HScroll>
      </StripsPane>
    </ConsoleBody>
  </Console>
);

/* ---------- song window ---------- */

const SongWindow = styled.section`background: #222126; border-radius: 6px 6px 0 0;`;
const WindowTitle = styled.header`
  height: 18px; display: grid; grid-template-columns: 1fr auto 1fr; align-items: center; padding: 0 4px;
  font-family: Inter, sans-serif; font-size: 8px; font-weight: 700; color: #b5b5b8;
`;
const Lights = styled.div`display: flex; gap: 4px;`;
const Light = styled.i<{ $c: string }>`width: 8px; height: 8px; margin-right: 1px; border-radius: 50%; background: ${(p) => p.$c};`;
const TitleText = styled.div`display: flex; align-items: center; gap: 4px;`;
const Toolbar = styled.div`height: 31px; display: flex; align-items: center; border-bottom: 2px solid #0e0e11;`;
const ParamPanel = styled.div`
  width: 116px; height: 21px; background: #121216; clip-path: polygon(0 0, 111px 0, 100% 100%, 0 100%); padding: 2px 0 0 29px; font-size: 8px; color: #9c9ca0;
  display: flex; gap: 34px; svg { margin-top: 11px; }
`;
const ToolGroup = styled.div<{ $ml: number }>`margin-left: ${(p) => p.$ml}px; height: 21px; display: flex; background: #0a0a0c; border: 1px solid #2c2b30; border-radius: 2px; overflow: hidden;`;
const Tool = styled.button<{ $on?: boolean; $w?: number }>`
  width: ${(p) => p.$w ?? 22}px; background: ${(p) => (p.$on ? "#2c77d0" : "transparent")}; font-size: 12px; color: #b9b9bc;
`;
const LineTool = styled(Tool)`background: linear-gradient(#2c77d0, #2c77d0) center bottom / 14px 2px no-repeat;`;
const Picker = styled.label<{ $w: number }>`
  width: ${(p) => p.$w}px; display: flex; flex-direction: column; align-items: center; justify-content: center; gap: 2px; line-height: 8px; color: #b9b9bc;
  select { width: 100%; font-weight: 700; color: #e0e0e2; text-align: center; text-align-last: center; height: 8px; line-height: 8px; }
`;
const PickerLine = styled.span`display: flex; width: 100%; align-items: center; padding-right: 4px;`;
const ToolbarEnd = styled.div`margin-left: auto; padding-right: 3px; display: grid; grid-template-columns: repeat(4, 31px); align-items: center; justify-items: center;`;

const Frame = styled.div`margin: 2px 2px 2px 3px; border: 1px solid #26285c; border-radius: 4px; padding: 2px 2px 1px 1px; background: #0b0b0e;`;
const ArrangeGrid = styled.div<{ $ruled?: boolean }>`
  display: grid; grid-template-columns: 159px minmax(0, 1fr) 11px; border-top: ${(p) => (p.$ruled ? "2px solid #060608" : "0")};
`;
const HeadTools = styled.div`height: 20px; background: #222126; border-right: 1px solid #111; display: flex; align-items: center; gap: 9px; padding: 0 3px 0 6px;`;
const MarkerHead = styled.div`height: 17px; background: #26252a; border-right: 1px solid #111; border-top: 1px solid #17171a; display: flex; align-items: center; gap: 10px; padding: 0 9px 0 8px; font-size: 8px; color: #a9a9ac; span { padding-right: 8px; }`;
const Ruler = styled.div`height: 20px; position: relative; background: linear-gradient(#3d3d46 0 3px, #2a292e 3px); border-left: 1px solid #8c8c8f; border-bottom: 1px solid #151518; overflow: hidden;`;
const RulerEnd = styled.div`
  height: 20px; overflow: hidden; padding: 4px 0 0 2px; background: linear-gradient(#3d3d46 0 3px, #2a292e 3px); border-bottom: 1px solid #151518; font-weight: 700; color: #b1b1b5;
`;
const LaneEnd = styled.div`height: 17px; background: #222126;`;
const RulerTick = styled.i<{ $major: boolean }>`position: absolute; bottom: 0; width: 1px; height: ${(p) => (p.$major ? 5 : 2)}px; background: #77777b;`;
const RulerNum = styled.span`position: absolute; top: 4px; margin-left: 2px; font-weight: 700; color: #b1b1b5;`;
const LoopSpan = styled.i`position: absolute; top: 0; bottom: 0; background: linear-gradient(#6a6a74 0 8px, #35353f 8px); &::after { content: ""; position: absolute; inset: 3px 0 10px 0; background: #35353f; clip-path: polygon(30% 0, 70% 0, 100% 100%, 0 100%); }`;
const MarkerLane = styled.div`height: 17px; position: relative; background: #222126; border-left: 1px solid #8c8c8f;`;
const Flag = styled.span<{ $kind: "start" | "end" | "mark" }>`
  position: absolute; top: 1px; height: 9px; line-height: 9px;
  ${(p) => p.$kind === "mark" && css`background: #b9b9bb; color: #2a2a2c; padding: 0 6px 0 2px; clip-path: polygon(0 0, 100% 0, calc(100% - 5px) 100%, 0 100%);`}
  ${(p) => p.$kind === "start" && css`background: #4560b8; color: #11182e; padding: 0 5px 0 1px; clip-path: polygon(0 0, 100% 0, calc(100% - 5px) 100%, 0 100%);`}
  ${(p) => p.$kind === "end" && css`background: #4560b8; color: #11182e; padding: 0 2px 0 6px; transform: translateX(-100%); clip-path: polygon(0 0, 100% 0, 100% 100%, 5px 100%);`}
`;
const FlagPole = styled.i<{ $c: string }>`position: absolute; top: 1px; bottom: 0; width: 1px; background: ${(p) => p.$c};`;
const TrackClip = styled.div`height: 520px; overflow: hidden; background: #19191c;`;
const TrackRows = styled.ol`height: 523px; display: grid; grid-template-rows: repeat(22, minmax(0, 1fr));`;
const TrackHead = styled.li<{ $t: Tone }>`
  display: grid; grid-template-columns: 7px 16px 58px minmax(0, 1fr) auto 5px 6px; border-bottom: 1px solid #0f1413; background: ${(p) => tones[p.$t].head};
  color: ${(p) => (p.$t === "sel" ? "#d5e8dc" : "#98a19f")};
`;
const ColorTab = styled.div<{ $t: Tone }>`background: linear-gradient(${(p) => (p.$t === "bus" ? "#26262a, #26262a" : `${tones[p.$t].line}, ${tones[p.$t].line}`)}) top / 100% 16px no-repeat, ${(p) => tones[p.$t].btn}; display: flex; align-items: flex-end;`;
const TrackNum = styled.span<{ $bus?: boolean }>`text-align: center; font-weight: 700; line-height: ${(p) => (p.$bus ? 14 : 18)}px;`;
const TrackPads = styled.div<{ $bus?: boolean }>`
  margin-top: 2px; height: ${(p) => (p.$bus ? 11 : 14)}px; display: grid; grid-template-columns: repeat(4, 1fr); font-size: ${(p) => (p.$bus ? 6 : 8)}px;
  border-radius: 2px; box-shadow: 0 0 1px 1px rgba(0,0,0,.3);
`;
const TrackPad = styled.button<{ $bg: string; $wide?: boolean; $ink?: string }>`grid-column: span ${(p) => (p.$wide ? 2 : 1)}; background: ${(p) => p.$bg}; border-right: 1px solid rgba(0,0,0,.25); color: ${(p) => p.$ink ?? "#b4baB8"}; white-space: nowrap;`;
const TrackName = styled.span<{ $bus?: boolean }>`padding-left: 5px; font-size: 8px; line-height: ${(p) => (p.$bus ? 14 : 18)}px; white-space: nowrap;`;
const TrackIcon = styled.span<{ $bus?: boolean }>`padding-top: ${(p) => (p.$bus ? 4 : 5)}px;`;
const Gutter = styled.i`background: #1e1d21; border-left: 1px solid #111; &::after { content: ""; display: block; height: 100%; margin-left: 3px; border-left: 1px solid #111; }`;
const LaneRows = styled(TrackRows)`border-left: 1px solid #8c8c8f; position: relative;`;
const Lane = styled.li<{ $t: Tone }>`
  position: relative; border-bottom: 1px solid rgba(255,255,255,.04); background-color: ${(p) => tones[p.$t].lane};
  background-image: linear-gradient(90deg, rgba(255,255,255,.07) 1px, transparent 1px), linear-gradient(90deg, rgba(255,255,255,.035) 1px, transparent 1px);
  background-size: calc(100% / 30) 100%, calc(100% / 60) 100%;
`;
const AutoLine = styled.i<{ $thin?: boolean }>`position: absolute; left: 0; right: 0; top: 6px; height: ${(p) => (p.$thin ? 1 : 2)}px; background: ${(p) => (p.$thin ? "#2b74c4" : "#24599a")};`;
const clipBg: Record<string, string> = { green: "#4ee287", sel: "#4ee287", pink: "#b4036c", violet: "#7b2dc3", blue: "transparent", bus: "transparent" };
const Clip = styled.div<{ $t: Tone; $dim?: boolean }>`
  position: absolute; top: 0; bottom: 0; overflow: hidden; background: ${(p) => (p.$dim && p.$t !== "blue" ? "#5c9479" : clipBg[p.$t])};
  border-left: ${(p) => (p.$t === "green" || p.$t === "sel" ? "1px solid #37b269" : "0")};
`;
const ClipTab = styled.span<{ $t: Tone; $dim?: boolean; $full?: boolean }>`
  position: absolute; top: 0; left: 0; height: 8px; line-height: 7px; padding: 0 8px 0 2px; white-space: nowrap; min-width: ${(p) => (p.$full ? "100%" : "0")};
  background: ${(p) => (p.$dim ? "#97a09b" : p.$t === "pink" ? "#75024a" : p.$t === "violet" ? "#4f1d82" : "#298250")}; color: ${(p) => (p.$t === "pink" || p.$t === "violet" ? "#e8cfe0" : "#bdf0cf")};
  clip-path: ${(p) => (p.$full ? "none" : "polygon(0 0, 100% 0, calc(100% - 5px) 100%, 0 100%)")};
`;
const ClipArt = styled.svg`position: absolute; inset: 0; width: 100%; height: 100%;`;
const FadeArt = styled.svg`position: absolute; right: 0; top: 0;`;
const GearTab = styled.span<{ $t: Tone }>`
  position: absolute; left: 0; bottom: 0; height: 8px; width: 14px; padding: 1px 0 0 3px; background: ${(p) => (p.$t === "pink" ? "#75024a" : "#4f1d82")};
  clip-path: polygon(0 0, 10px 0, 100% 100%, 0 100%);
`;
const Joint = styled.i`position: absolute; left: 0; top: 8px; height: 7px; width: 2px; background: #96808c;`;
const MuteTab = styled.span`position: absolute; left: 0; bottom: 0; height: 8px; width: 14px; padding: 1px 0 0 3px; background: #97a09b; clip-path: polygon(0 0, 10px 0, 100% 100%, 0 100%);`;
const VScroll = styled.div`background: #1b1a1e; display: flex; flex-direction: column; align-items: center; gap: 4px; padding: 3px 0;`;
const VThumb = styled.i`width: 3px; height: 478px; background: #5d5d60; border-radius: 2px;`;
const FootHead = styled.div`height: 11px; background: #1c1b1f; display: grid; grid-template-columns: 31px 30px 30px 1fr 14px 12px; align-items: center; justify-items: center; font-weight: 700; font-size: 6px;
  select { width: 100%; text-align: center; text-align-last: center; font-size: 7px; font-weight: 400; }`;
const FootScroll = styled.div`height: 11px; grid-column: span 2; background: #161518; display: flex; align-items: center; padding: 0 4px; gap: 6px;`;
const SongThumb = styled(HThumb)`flex: 0 0 45%;`;
const ZoomRange = styled.input`
  appearance: none; width: 58px; height: 8px; background: radial-gradient(circle at 55px 4px, #88888b 2px, transparent 3px), linear-gradient(#77777a, #77777a) center / 100% 1px no-repeat;
  &::-webkit-slider-thumb { appearance: none; width: 2px; height: 7px; background: #88888b; }
`;

const seq = (n: number, fn: (i: number) => React.ReactNode) => Array.from({ length: n }, (_, i) => fn(i));
const noise = (i: number) => Math.abs(Math.sin(i * 12.9898) * 43758.5453) % 1;

/* miniature notes, hits and waveforms inside each clip */
const ClipDrawing = ({ c }: { c: ClipData }) => {
  const w = Math.round((c.to - c.at) * 8.5);
  const dark = "#45504b";
  let art: React.ReactNode = null;
  if (c.look === "kick") {
    const hi = c.dim ? "#5a7a80" : "#3593d0";
    const mid = c.dim ? "#435a60" : "#296a94";
    art = (
      <><rect width={w} height="24" fill={c.dim ? "#2a3436" : "#1f3d50"} />
        {seq(Math.ceil(w / 8.5), (i) => {
          const x = i * 8.5;
          return noise(i) > 0.25
            ? <g key={i}><rect x={x} width="1.200" height="24" fill={hi} /><rect x={x + 2.2} width="1.200" height="24" fill={hi} /><rect x={x + 4.2} width={noise(i + 9) > 0.5 ? 3.4 : 2} height="24" fill={mid} /></g>
            : <g key={i}><rect x={x} width="2.200" height="24" fill={mid} /><rect x={x + 3} width="1.200" height="24" fill={hi} /><rect x={x + 5} width="1" height="24" fill={mid} /><rect x={x + 7} width="1" height="24" fill={hi} /></g>;
        })}</>
    );
  }
  if (c.look === "hat") art = (
    <><rect width={w} height="24" fill={c.dim ? "#283235" : "#1f3a48"} />
      {seq(Math.floor(w / 3), (i) => <rect key={i} x={i * 3} width="1" height="24" fill={c.dim ? "#46595f" : noise(i) > 0.3 ? "#2f6e98" : "#27506a"} />)}</>
  );
  if (c.look === "chord") art = seq(Math.ceil(w / 9), (i) => <rect key={i} x={i * 9} y={i % 2 ? 12 : 13} width={8} height="3" fill={dark} />);
  if (c.look === "riff") art = seq(Math.ceil(w / 6), (i) => <rect key={i} x={i * 6} y={[12, 13, 13, 12, 13][i % 5]} width={6} height="2" fill={dark} />);
  if (c.look === "sub") art = seq(Math.ceil(w / 8), (i) => <rect key={i} x={i * 8} y={i % 2 ? 12 : 13} width={9} height="2" fill={dark} />);
  if (c.look === "bass") art = seq(Math.ceil(w / 8), (i) => <rect key={i} x={i * 8} y={c.at > 41 && i % 8 === 5 ? 13 : 14} width={8} height="1" fill="#35865a" />);
  if (c.look === "lead") art = seq(Math.ceil(w / 5), (i) => <rect key={i} x={i * 5} y={noise(Math.floor(i / 2)) > 0.6 ? 11 : 12} width={noise(i + 3) > 0.85 ? 3 : 5} height="1" fill="#2f7a50" />);
  if (c.look === "dots") art = seq(Math.ceil(w / 3), (i) => <rect key={i} x={i * 3} y={10} width={2} height={i % 22 > 17 ? 3 : 2} fill="#348055" />);
  if (c.look === "arp") art = seq(Math.ceil(w / 3), (i) => <rect key={i} x={i * 3} y={11 + [0, 2, 1, 3, 0, 2][i % 6]} width={2} height="1" fill="#2f7a50" />);
  if (c.look === "loop") art = seq(Math.ceil(w / 3), (i) => { const h = noise(i + c.at) > 0.7 ? 3 : 1; return i < 4 ? null : <rect key={i} x={i * 3} y={17 - h / 2} width={noise(i) > 0.4 ? 3 : 1} height={h} fill="#75024a" />; });
  if (c.look === "noise") art = seq(Math.ceil(w / 2), (i) => { const h = 2 + noise(i + c.at) * 7; return <rect key={i} x={i * 2} y={16 - h / 2} width="2" height={h} fill="#6b0346" />; });
  if (c.look === "sliver") art = <><rect y="4" width="1" height="3" fill="#3d1769" /><rect x="2" y="5" width="2" height="1" fill="#3d1769" /><rect y="15" width="1" height="3" fill="#3d1769" /><rect x="2" y="16" width="2" height="1" fill="#3d1769" /></>;
  if (c.look === "hit") art = <path d="M0 14h2v2h2v-1h3v1h2v8H0z" fill="#4f1d82" />;
  if (c.look === "sweep") art = <path d="M0 15h9l3 2 7-4v7l-4-2 4 6H0z" fill="#4f1d82" />;
  return <ClipArt viewBox={`0 0 ${w} 23`} preserveAspectRatio="none" shapeRendering={c.look === "kick" ? "auto" : "crispEdges"}>{art}</ClipArt>;
};

const ClipView = ({ c, tone }: { c: ClipData; tone: Tone }) => {
  const sound = tone === "pink" || tone === "violet";
  return (
    <Clip $t={tone} $dim={c.dim} style={{ left: pct(c.at - 1), width: pct(c.to - c.at) }}>
      <ClipDrawing c={c} />
      {c.title && <ClipTab $t={tone} $dim={c.dim} $full={sound && c.look !== "plain"}>{c.title}</ClipTab>}
      {sound && c.title && c.look !== "plain" && <GearTab $t={tone}><Gear /></GearTab>}
      {c.joint && <Joint />}
      {c.dim && tone === "green" && <MuteTab><Glyph d="M0 2h2l2-2v6L2 4H0z" w={6} h={6} c="#e4e4e6" fill="#e4e4e6" sw={0.5} /></MuteTab>}
      {c.fade && (
        <FadeArt width={c.fade} height="23" viewBox="0 0 10 23" preserveAspectRatio="none">
          <path d={c.look === "plain" ? "M0 0h10v23z" : "M0 7h10v16z"} fill="#c24a93" /><path d={c.look === "plain" ? "M0 0l10 23" : "M0 7l10 16"} stroke="#7e2b60" strokeWidth=".6" />
        </FadeArt>
      )}
    </Clip>
  );
};

const TrackHeadView = ({ c }: { c: Channel }) => {
  const bus = c.kind === "bus";
  const sel = c.tone === "sel";
  const read = c.n === 12;
  const bg = bus ? "#3e3e43" : sel ? "#1d6844" : tones[c.tone].btn;
  return (
    <TrackHead $t={c.tone}>
      <ColorTab $t={c.tone}><Glyph d="M1 5l1.500-3 1.500 3L5.500 2" w={7} h={7} c="rgba(255,255,255,.25)" sw={0.8} /></ColorTab>
      <TrackNum $bus={bus}>{c.n}</TrackNum>
      <TrackPads $bus={bus}>
        <TrackPad $bg={bg}>M</TrackPad><TrackPad $bg={bg}>S</TrackPad>
        {bus ? <TrackPad $wide $bg={read ? "#8cc878" : "#4a4a4f"} $ink={read ? "#2c4723" : undefined}>{read ? "Read" : "Auto: Off"}</TrackPad> : (
          <><TrackPad $bg={sel ? "#f4595c" : bg} aria-label="Record"><Dot c={sel ? "#fff" : undefined} /></TrackPad><TrackPad $bg={sel ? "#62b4d2" : bg} aria-label="Monitor"><Monitor c={sel ? "#fff" : undefined} /></TrackPad></>
        )}
      </TrackPads>
      <TrackName $bus={bus}>{c.name}</TrackName>
      <TrackIcon $bus={bus}><KindIcon kind={c.kind} c={sel ? "#dff0e6" : "#a0aaa7"} /></TrackIcon>
      <i /><Gutter />
    </TrackHead>
  );
};

const flags = [{ bar: 17, t: "#2" }, { bar: 41, t: "#3" }, { bar: 57, t: "#4" }, { bar: 73, t: "#5" }, { bar: 89, t: "#6" }];

const Arrange = () => (
  <Frame>
    <ArrangeGrid>
      <div>
        <HeadTools>
          <Lines /><Glyph d="M3 4v5M3 1v1.500" w={6} h={10} sw={1.8} c="#c9c9cc" /><Wrench size={10} fill="currentColor" />
          <Glyph d="M1 9C2 0 5 0 7 6s4 2 6-5M0 9h2M12 1h2" w={14} h={11} c="#d0d0d2" />
          <Push /><Glyph d="M0 1h10M3 4h7M0 7h10M0 4h1" w={10} h={8} /><Plus s={9} c="#c9c9cc" />
        </HeadTools>
        <MarkerHead><span>Marker</span><Plus c="#d0d0d2" /><Glyph d="M0 3h6" w={6} h={6} /><Push /><Glyph d="M2.500 6V1h4v4M1 6h1.500M5 5.500h1.500" w={8} h={8} sw={1.5} c="#d0d0d2" /><Glyph d="M1 10V1h9L8 6H1" w={10} h={10} sw={1} c="#808084" /></MarkerHead>
      </div>
      <div>
        <Ruler>
          <LoopSpan style={{ left: pct(37.8), width: pct(2.2) }} />
          {seq(60, (i) => <RulerTick key={i} $major={i % 2 === 0} style={{ left: pct(i * 2) }} />)}
          {seq(30, (i) => <RulerNum key={i} style={{ left: pct(i * 4) }}>{i * 4 + 1}</RulerNum>)}
        </Ruler>
        <MarkerLane>
          <Flag $kind="start" style={{ left: 0 }}>Start</Flag>
          {flags.map((f) => <React.Fragment key={f.bar}><Flag $kind="mark" style={{ left: pct(f.bar - 1) }}>{f.t}</Flag><FlagPole $c="#c9c9cb" style={{ left: pct(f.bar - 1) }} /></React.Fragment>)}
          <Flag $kind="end" style={{ left: pct(104) }}>End</Flag><FlagPole $c="#4560b8" style={{ left: pct(104) }} />
        </MarkerLane>
      </div>
      <div><RulerEnd>12</RulerEnd><LaneEnd /></div>
    </ArrangeGrid>
    <ArrangeGrid $ruled>
      <TrackClip><TrackRows>{channels.map((c) => <TrackHeadView key={c.n} c={c} />)}</TrackRows></TrackClip>
      <TrackClip>
        <LaneRows>
          {channels.map((c) => (
            <Lane key={c.n} $t={c.tone}>
              {c.kind === "bus" && <AutoLine $thin={c.n > 12} />}
              {clips[c.n]?.map((clip, i) => <ClipView key={i} c={clip} tone={c.tone} />)}
            </Lane>
          ))}
        </LaneRows>
      </TrackClip>
      <VScroll><Arrow dir="u" /><VThumb /><Push /><Arrow dir="d" /></VScroll>
      <FootHead>
        <span>M</span><span>S</span><Power s={7} /><select aria-label="Track height"><option>Tiny</option></select><Caret s={5} /><Lines n={3} w={5} c="#85858a" />
      </FootHead>
      <FootScroll><Arrow dir="l" /><SongThumb /><Push /><Arrow dir="r" /><ZoomRange type="range" min={0} max={100} defaultValue={12} aria-label="Zoom" /><Lines n={3} w={5} c="#6d6d70" /></FootScroll>
    </ArrangeGrid>
  </Frame>
);

const Transport = styled.footer`height: 32px; display: flex; justify-content: space-between; align-items: stretch; border-bottom: 2px solid #0e0e11; padding-left: 200px; background: #222126;`;
const Deck = styled.div`
  width: 693px; margin: 1px 0 3px; background: #151417; clip-path: polygon(0 0, 100% 0, calc(100% - 8px) 100%, 6px 100%); display: flex; align-items: center; padding: 2px 12px 0 14px; gap: 9px;
`;
const Stack = styled.div<{ $w?: number; $center?: boolean; $c?: string }>`
  width: ${(p) => (p.$w ? `${p.$w}px` : "auto")}; display: flex; flex-direction: column; gap: 2px; line-height: 8px; white-space: nowrap; align-items: ${(p) => (p.$center ? "center" : "flex-start")};
  color: ${(p) => p.$c ?? "#8d8d90"}; font-size: 7px;
`;
const Big = styled.b`font-size: 8px; font-weight: 400; color: #e0e0e2;`;
const Mid = styled.span`color: #c9c9cc;`;
const Clock = styled.b`font-size: 12px; line-height: 10px; color: #e0e0e2;`;
const LocTime = styled.span`font-size: 9px; line-height: 8px; color: #dcdcde;`;
const Buttons = styled.div<{ $gap: number }>`display: flex; align-items: center; gap: ${(p) => p.$gap}px;`;
const BarsPick = styled.span`display: flex; gap: 5px; align-items: center;`;
const Views = styled.div`display: flex; padding-top: 1px;`;
const ViewButton = styled.button<{ $on?: boolean; $w: number }>`width: ${(p) => p.$w}px; font-size: 8px; background: ${(p) => (p.$on ? "#2c77d0" : "transparent")}; color: #e0e0e2;`;

const TransportView = () => (
  <Transport>
    <Deck>
      <Stack $w={40}>
        <svg width="40" height="8" viewBox="0 0 40 8"><rect width="40" height="3" fill="#2c2b30" /><rect width="8" height="3" fill="#4fa6cf" /><rect y="5" width="40" height="3" fill="#2c2b30" /></svg>
        <span>Performance</span>
      </Stack>
      <svg width="16" height="16" viewBox="0 0 16 16">{seq(12, (i) => <circle key={i} cx={8 + 6.5 * Math.cos((i * Math.PI) / 6)} cy={8 + 6.5 * Math.sin((i * Math.PI) / 6)} r=".9" fill="#8d8d90" />)}</svg>
      <Stack $w={33}><Big>48.0 kHz</Big><Mid>176.0 ms</Mid></Stack>
      <Stack $w={44}><Big>7:11 days</Big><span>Record Max</span></Stack>
      <Stack $center $w={87}><Clock>00001.01.01.00</Clock><BarsPick>Bars<Caret s={5} /></BarsPick></Stack>
      <Buttons $gap={8}>
        <button aria-label="Back"><Arrow dir="l" c="#c4c4c7" s={8} /></button>
        <button aria-label="Rewind"><Glyph d="M5.500 0v7L0 3.500zM11 0v7L5.500 3.500z" w={11} h={7} fill="#c4c4c7" sw={0} /></button>
        <button aria-label="Forward"><Glyph d="M0 0v7l5.500-3.500zM5.500 0v7L11 3.500z" w={11} h={7} fill="#c4c4c7" sw={0} /></button>
        <button aria-label="Next"><Arrow dir="r" c="#c4c4c7" s={8} /></button>
        <button aria-label="Return to start"><Glyph d="M1 0v7M8 0v7L2 3.500z" w={8} h={7} fill="#c4c4c7" sw={0.8} /></button>
      </Buttons>
      <Buttons $gap={10}>
        <button aria-label="Stop"><Glyph d="M0 0h13v13H0z" w={13} h={13} fill="#3fa9d4" sw={0} /></button>
        <button aria-label="Play"><Glyph d="M1 0v13l11-6.500z" w={12} h={13} fill="#cfcfd1" sw={0} /></button>
        <button aria-label="Record"><svg width="13" height="13" viewBox="0 0 13 13"><circle cx="6.500" cy="6.500" r="6" fill="#cfcfd1" /></svg></button>
        <button aria-label="Loop"><Glyph d="M6 11H5a4.500 4.500 0 0 1 0-9h10a4.500 4.500 0 0 1 0 9h-4c3 0 4-6 0-6S8 8 6 11" w={20} h={13} c="#9a9a9d" /></button>
      </Buttons>
      <Stack $c="#3c93b8"><span>&nbsp;L</span><span>&nbsp;R</span></Stack>
      <Stack><LocTime>00038.04.01.00</LocTime><LocTime>00040.04.04.62</LocTime></Stack>
      <Buttons $gap={8}>
        <Stack $center><Glyph d="M0 2h3l2 2h5" w={10} h={6} sw={1} /><Glyph d="M4.500 1a2 2 0 1 0 .1 0" w={9} h={6} /></Stack>
        <Stack $center><Glyph d="M1 0v6M4 0v6M1 3h9M5 2h4" w={10} h={6} sw={1} /><Glyph d="M0 3h10M3 1v4M7 1v4" w={10} h={6} /></Stack>
      </Buttons>
      <Stack $w={28} $center><Big>130.00</Big><span>Tempo</span></Stack>
      <Stack>
        <svg width="57" height="6" viewBox="0 0 57 6"><rect width="57" height="2" fill="#2c2b30" /><rect width="42" height="2" fill="#3d3d42" /><rect y="3" width="57" height="2" fill="#2c2b30" /><rect y="3" width="42" height="2" fill="#3d3d42" /></svg>
        <svg width="57" height="7" viewBox="0 0 57 7">{seq(21, (i) => <rect key={i} x={i * 2} width="1" height="6" fill={i < 16 ? "#4c93b2" : "#34343a"} />)}<circle cx="49" cy="3" r="2.800" fill="#57b8de" /><circle cx="53.500" cy="3" r="2.500" fill="none" stroke="#57b8de" /></svg>
      </Stack>
    </Deck>
    <Views><ViewButton $w={35}>Edit</ViewButton><ViewButton $w={35} $on>Mix</ViewButton><ViewButton $w={41}>Browse</ViewButton></Views>
  </Transport>
);

const Song = () => (
  <SongWindow>
    <WindowTitle>
      <Lights><Light $c="#f2504c" /><Light $c="#f5b52e" /><Light $c="#3cc14a" /></Lights>
      <TitleText><Glyph d="M1 1h4l2 2v5H1zM2 6l3-2v3" w={8} h={9} fill="#77777b" />Studio One - 230128 OSR Loop House</TitleText>
      <span />
    </WindowTitle>
    <Toolbar>
      <ParamPanel>Parameter<Caret c="#d0d0d2" s={6} /></ParamPanel>
      <ToolGroup $ml={104}>
        <Tool $on $w={10} aria-label="Bracket"><Glyph d="M4 1H1v13h3" w={4} h={15} sw={1} c="#cfe0f5" /></Tool>
        <Tool $on $w={24} aria-label="Arrow"><Glyph d="M1 0v9l2-2 2 4 2-1-2-4h3z" w={9} h={11} fill="#fff" c="#fff" sw={0.3} /></Tool>
        <Tool $on $w={22} aria-label="Range"><svg width="11" height="11" viewBox="0 0 11 11" fill="none" stroke="#dce9f8"><path d="M.5 .5h7v7h-7z" strokeDasharray="2 1" /><path d="M3.500 3.500h7v7h-7z" strokeDasharray="2 1" /><path d="M4 4h4v4H4z" fill="#dce9f8" stroke="none" /></svg></Tool>
        <LineTool $w={24} aria-label="Split"><Glyph d="M1 10.500L3 8l6-6.500 1.500-.5-1 2-5.500 6z" w={12} h={12} fill="#b9b9bc" sw={0.6} /></LineTool>
        <Tool aria-label="Eraser"><Glyph d="M1 7l5-5 4 2-5 5-3 1z" w={12} h={12} fill="#8c8c90" /></Tool>
        <Tool aria-label="Paint"><Glyph d="M1 11L10 1" w={12} h={12} sw={2} /></Tool>
        <Tool aria-label="Mute"><Glyph d="M1 4h2l4-3v9L3 7H1zM1 0l10 11" w={12} h={12} fill="#8c8c90" /></Tool>
        <Tool aria-label="Bend"><Glyph d="M0 6h12M4 3v6M6 1v3M8 3v7M6 8v3" w={12} h={12} /></Tool>
        <Tool $w={24} aria-label="Listen"><Glyph d="M0 4h2l3-3v10L2 8H0zM7 4v4M9 2v8M11 1v10" w={12} h={12} fill="#b9b9bc" /></Tool>
      </ToolGroup>
      <ToolGroup $ml={9}>
        <Tool $w={18} aria-label="Audio bend"><Glyph d="M1.500 0v11M4 1l4 4.500L4 10zM9 2v7" w={10} h={11} c="#9c9ca0" fill="#77777b" sw={1.1} /></Tool>
        <Tool $w={20} aria-label="Strip silence"><Glyph d="M1 6h10M3 3v6M9 3v6M1 4v4M11 4v4" w={12} h={12} /></Tool>
        <Tool $w={18} aria-label="Quantize">Q</Tool>
        <Tool $w={22} aria-label="Macro"><Glyph d="M0 9c3-4 11-4 14 0M4 0h6v4H4zM5 9l2 3 2-3" w={14} h={13} /></Tool>
      </ToolGroup>
      <ToolGroup $ml={9}>
        <Picker $w={54}>Quantize<PickerLine><select><option>1/16</option></select><Caret s={5} /></PickerLine></Picker>
        <Picker $w={50}>Timebase<PickerLine><select><option>Bars</option></select><Caret s={5} /></PickerLine></Picker>
        <Picker $w={54}>Snap<PickerLine><select><option>Adaptive</option></select><Caret s={5} /></PickerLine></Picker>
        <Tool $on $w={21} aria-label="Snap"><Glyph d="M1.500 0v13M2 6.500h9M3.500 5h6.500v3H3.500" w={11} h={13} c="#cfe0f5" sw={1} /></Tool>
      </ToolGroup>
      <ToolGroup $ml={10}>
        <Tool aria-label="Autoscroll"><Glyph d="M1 2h2v7H1zM5.500 1.500h5v8h-5zM9 4v3" w={11} h={11} sw={1} /></Tool>
        <Tool $on aria-label="Follow"><Glyph d="M0 6h8M5 3l3 3-3 3M11 0v12" w={12} h={12} c="#fff" sw={1.8} /></Tool>
        <Tool $on aria-label="Cursor"><Glyph d="M5.500 0v13M3 4L1 6.500 3 9M8 4l2 2.500L8 9" w={11} h={13} c="#cfe0f5" sw={1.2} /></Tool>
      </ToolGroup>
      <ToolGroup $ml={9}><Tool $w={20}>?</Tool></ToolGroup>
      <ToolGroup $ml={7}><Tool $w={20} aria-label="Video"><Glyph d="M.5 .5h11v9H.5zM3 0v10M9 0v10M0 5h12" w={12} h={10} /></Tool></ToolGroup>
      <ToolbarEnd>
        <svg width="21" height="21" viewBox="0 0 21 21"><circle cx="10.500" cy="10.500" r="10" fill="#09090b" /><path d="M4 13l5-2 3-6 4-1-3 5 1 4-4 4-2-3z" fill="#3c3c40" /></svg>
        <svg width="14" height="14" viewBox="0 0 14 14" fill="none" stroke="#c4c4c7" strokeWidth="1.200"><circle cx="7" cy="7" r="6.300" /><path d="M5 4v5M3.500 8L5 9.500 6.500 8M9 10V5M7.500 6L9 4.500 10.500 6" /></svg>
        <Glyph d="M1 6l6-5 6 5v8H1z" w={14} h={15} c="#c9c9cc" sw={1.4} />
        <Glyph d="M1 1h6l3 3v10H1z" w={11} h={15} c="#3d3c42" />
      </ToolbarEnd>
    </Toolbar>
    <Arrange />
    <TransportView />
  </SongWindow>
);

export default function App() {
  return (
    <main>
      <Global />
      <Menu faded />
      <ConsoleView />
      <Menu />
      <Song />
    </main>
  );
}
